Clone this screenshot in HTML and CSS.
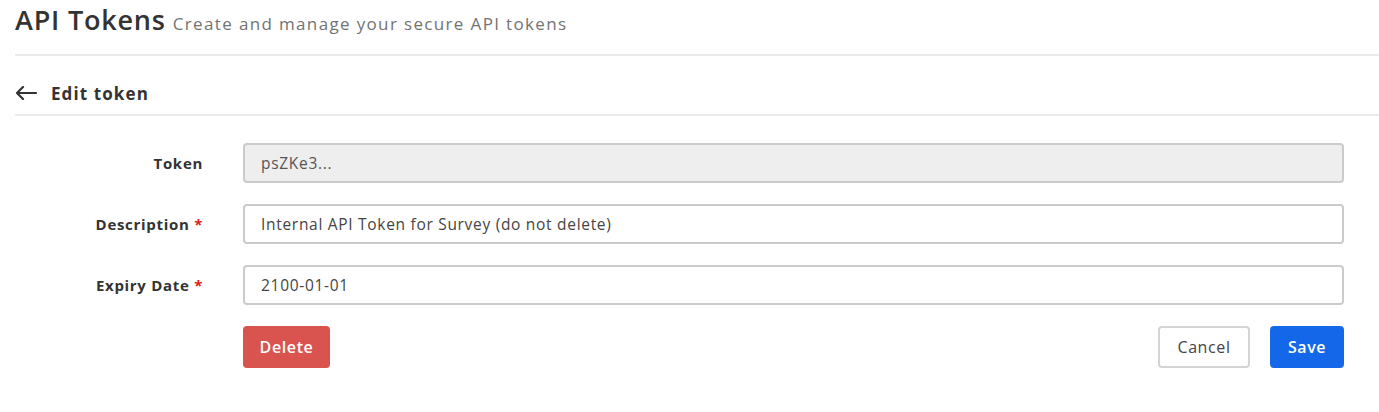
FILE: index.html
```html
<!DOCTYPE html>
<html>
<head>
<meta charset="utf-8">
<link rel="stylesheet" href="styles.css">
</head>
<body>
<div class="page">
  <header class="page-header">
    <h1 class="title">API Tokens</h1>
    <span class="subtitle">Create and manage your secure API tokens</span>
  </header>
  <div class="section-header">
    <svg class="back" width="22" height="14" viewBox="0 0 22 14"><path d="M21 7H2M8 1L2 7l6 6" fill="none" stroke="#333" stroke-width="2.2" stroke-linecap="round" stroke-linejoin="round"/></svg>
    <span class="section-title">Edit token</span>
  </div>
  <form class="form">
    <div class="row">
      <label class="label">Token</label>
      <div class="field disabled">psZKe3...</div>
    </div>
    <div class="row">
      <label class="label">Description <span class="req">*</span></label>
      <div class="field">Internal API Token for Survey (do not delete)</div>
    </div>
    <div class="row">
      <label class="label">Expiry Date <span class="req">*</span></label>
      <div class="field">2100-01-01</div>
    </div>
    <div class="actions">
      <button type="button" class="btn btn-delete">Delete</button>
      <div class="right">
        <button type="button" class="btn btn-cancel">Cancel</button>
        <button type="button" class="btn btn-save">Save</button>
      </div>
    </div>
  </form>
</div>
</body>
</html>
```
FILE: styles.css
```css
* { box-sizing: border-box; }
html, body { margin: 0; padding: 0; background: #fff; }
body { font-family: "Open Sans", "Noto Sans", sans-serif; color: #333; }
.page { padding-left: 15px; }
.page-header {
  display: flex;
  align-items: baseline;
  gap: 7px;
  height: 56px;
  padding-top: 2px;
  border-bottom: 2px solid #ebebeb;
}
.title { margin: 0; font-size: 27px; font-weight: 600; color: #333; line-height: 36px; letter-spacing: 0.8px; }
.subtitle { font-size: 17px; color: #737373; letter-spacing: 1.35px; }
.section-header {
  display: flex;
  align-items: center;
  gap: 14px;
  height: 60px;
  padding-top: 16px;
  border-bottom: 2px solid #ebebeb;
}
.back { display: block; }
.section-title { font-size: 17px; font-weight: 700; color: #333; letter-spacing: 1.1px; }
.form { padding-top: 27px; padding-right: 35px; }
.row { display: flex; align-items: center; height: 40px; margin-bottom: 21px; }
.label {
  width: 228px;
  padding-right: 40px;
  text-align: right;
  font-size: 15px;
  font-weight: 700;
  color: #333;
  letter-spacing: 0.7px;
}
.req { color: #e02020; }
.field {
  flex: 1;
  height: 40px;
  border: 2px solid #cbcbcb;
  border-radius: 4px;
  padding: 0 16px;
  display: flex;
  align-items: center;
  font-size: 15.5px;
  color: #444;
  letter-spacing: 0.7px;
}
.field.disabled { background: #eeeeee; color: #555; }
.actions {
  display: flex;
  justify-content: space-between;
  margin-left: 228px;
}
.right { display: flex; gap: 20px; }
.btn {
  height: 42px;
  border-radius: 4px;
  font-family: inherit;
  font-size: 16px;
  font-weight: 600;
  border: none;
  padding: 0;
  letter-spacing: 0.6px;
}
.btn-delete { background: #d9534f; color: #fff; width: 87px; }
.btn-cancel { background: #fff; color: #444; border: 2px solid #d4d4d4; width: 92px; font-weight: 500; }
.btn-save { background: #1467e8; color: #fff; width: 74px; }
```
